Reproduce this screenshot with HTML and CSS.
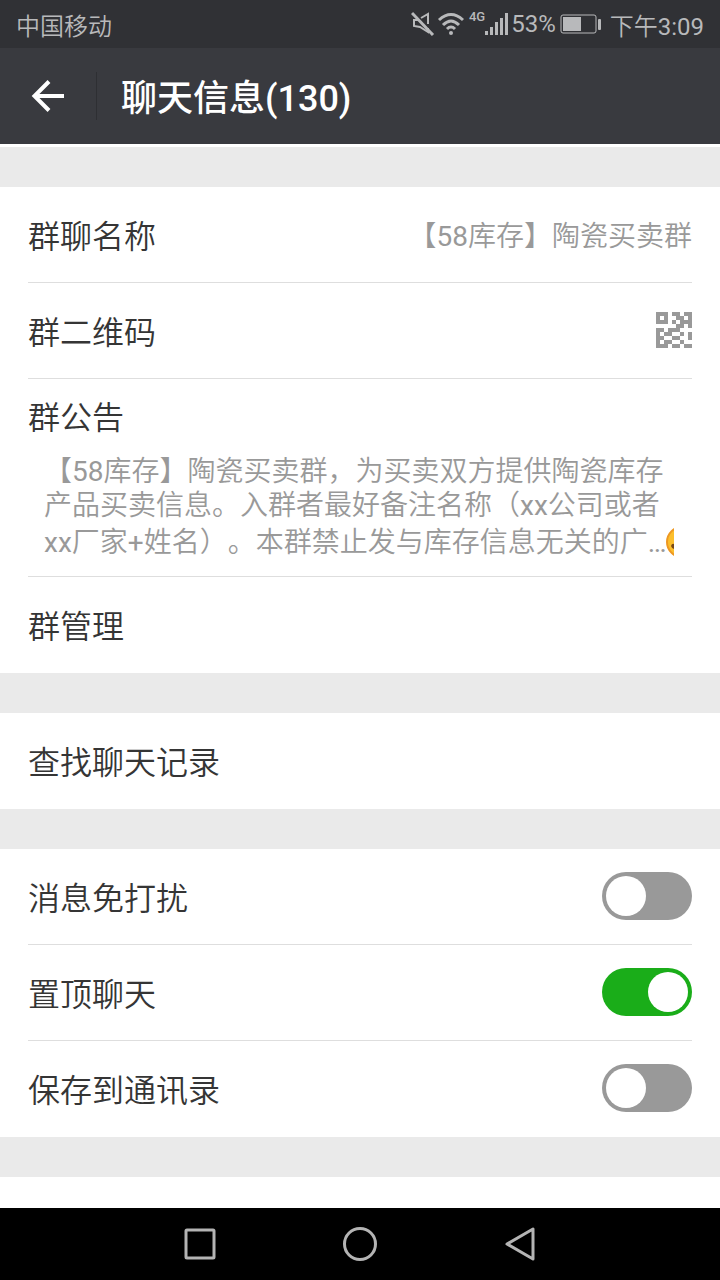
FILE: index.html
```
<!DOCTYPE html>
<html lang="zh-CN">
<head>
  <meta charset="UTF-8" />
  <title>聊天信息</title>
  <meta name="viewport" content="width=device-width, initial-scale=1.0" />
  <link rel="stylesheet" href="styles.css">
</head>
<body>

<div class="status-bar">
  <span>中国移动</span>
  <div class="status-icons">
    <svg class="icon-mute" width="24" height="26" viewBox="0 0 24 26" fill="none" stroke="currentColor" stroke-width="2">
      <path d="M10 7 L17 3 V13 M17 17 V21 L9 16 L3 15 V9 H7" />
      <path d="M1 2 L22 24" stroke-width="3" />
    </svg>
    <svg class="icon-wifi" width="28" height="24" viewBox="0 0 28 24" fill="none" stroke="currentColor" stroke-width="3">
      <path d="M2 8 Q14 -3 26 8" />
      <path d="M6 13 Q14 5 22 13" />
      <path d="M10 17 Q14 13 18 17" />
      <circle cx="14" cy="21" r="2" fill="currentColor" stroke="none" />
    </svg>
    <span class="net">4G</span>
    <svg class="icon-signal" width="24" height="22" viewBox="0 0 24 22" fill="currentColor">
      <rect x="0" y="18" width="3" height="4" />
      <rect x="5" y="14" width="3" height="8" />
      <rect x="10" y="9" width="3" height="13" />
      <rect x="15" y="5" width="3" height="17" />
      <rect x="20" y="0" width="3" height="22" />
    </svg>
    <span>53%</span>
    <svg class="icon-battery" width="42" height="20" viewBox="0 0 42 20">
      <rect x="1" y="1" width="35" height="18" rx="2" fill="none" stroke="currentColor" />
      <rect x="3" y="3" width="18" height="14" fill="currentColor" />
      <rect x="38" y="5" width="3" height="11" rx="1" fill="currentColor" />
    </svg>
    <span>下午3:09</span>
  </div>
</div>

<header class="header">
  <button class="back" aria-label="返回">
    <svg width="34" height="32" viewBox="0 0 34 32" fill="none" stroke="currentColor" stroke-width="4">
      <path d="M33 16 H4" />
      <path d="M18 1.500 L3.500 16 L18 30.500" />
    </svg>
  </button>
  <h1>聊天信息(130)</h1>
</header>

<main>
  <section class="group">
    <a class="row" href="#">
      <span>群聊名称</span>
      <span class="value">【58库存】陶瓷买卖群</span>
    </a>
    <a class="row" href="#">
      <span>群二维码</span>
      <svg width="36" height="36" viewBox="0 0 9 9" fill="#999" shape-rendering="crispEdges">
        <path fill-rule="evenodd" d="M0 0h3v3h-3z M1 1v1h1v-1z" />
        <path d="M4 0h2v1h-2z M7 0h2v1h-2z M5 1h2v1h-2z M8 1h1v3h-1z M4 2h1v1h-1z M6 2h2v1h-2z M5 3h2v1h-2z M0 4h2v1h-2z M3 4h3v1h-3z M0 5h1v1h-1z M2 5h2v1h-2z M6 5h1v1h-1z M8 5h1v2h-1z M0 6h2v1h-2z M4 6h2v1h-2z M2 7h2v1h-2z M6 7h1v1h-1z M0 7h1v1h-1z M0 8h3v1h-3z M4 8h2v1h-2z M7 8h2v1h-2z" />
      </svg>
    </a>
    <a class="row notice" href="#">
      <span>群公告</span>
      <p>【58库存】陶瓷买卖群，为买卖双方提供陶瓷库存产品买卖信息。入群者最好备注名称（xx公司或者xx厂家+姓名）。本群禁止发与库存信息无关的广…<svg class="emoji" width="8" height="38" viewBox="0 0 8 38">
        <circle cx="16" cy="19" r="15" fill="#fcbf2d" stroke="#ee9822" stroke-width="2" />
        <path d="M5 23 Q6 20 8 21 V26 Q6 26 5 23z" fill="#7a4a14" />
      </svg></p>
    </a>
    <a class="row" href="#"><span>群管理</span></a>
  </section>

  <section class="group">
    <a class="row" href="#"><span>查找聊天记录</span></a>
  </section>

  <section class="group">
    <label class="row" for="mute">
      <span>消息免打扰</span>
      <input class="switch" type="checkbox" id="mute">
    </label>
    <label class="row" for="sticky">
      <span>置顶聊天</span>
      <input class="switch" type="checkbox" id="sticky" checked>
    </label>
    <label class="row" for="save">
      <span>保存到通讯录</span>
      <input class="switch" type="checkbox" id="save">
    </label>
  </section>

  <section class="group rest"></section>
</main>

<nav class="nav-bar">
  <button aria-label="最近任务">
    <svg width="36" height="36" viewBox="0 0 36 36"><rect x="4" y="4" width="28" height="28" rx="1" /></svg>
  </button>
  <button aria-label="主屏幕">
    <svg width="36" height="36" viewBox="0 0 36 36"><circle cx="18" cy="18" r="15.500" /></svg>
  </button>
  <button aria-label="返回上一级">
    <svg width="36" height="36" viewBox="0 0 36 36"><path d="M31 3 V33 L5 18z" /></svg>
  </button>
</nav>

</body>
</html>
```

FILE: styles.css
```
* { box-sizing: border-box; margin: 0; padding: 0; }
body {
  font-family: Roboto, "Noto Sans CJK SC DemiLight", "Noto Sans CJK SC", sans-serif;
  display: flex;
  flex-direction: column;
  min-height: 100vh;
  background: #eaeaea;
  color: #353535;
  text-spacing-trim: space-all;
}
button {
  border: 0;
  background: none;
  color: inherit;
  cursor: pointer;
}
.status-bar {
  display: flex;
  justify-content: space-between;
  align-items: center;
  height: 48px;
  padding: 0 16px;
  background: #303135;
  color: #b8b9bb;
  font-size: 24px;
}
.status-icons {
  display: flex;
  align-items: center;
  gap: 4px;
}
.status-icons .net {
  align-self: flex-start;
  margin: 2px -4px 0 0;
  font-size: 13px;
  font-weight: 500;
}
.icon-mute {
  margin-right: -2px;
}
.icon-signal {
  margin-right: -2px;
}
.icon-battery {
  margin-right: 4px;
}
.header {
  display: flex;
  align-items: center;
  height: 96px;
  background: #393a3f;
  color: #fff;
}
.back {
  display: flex;
  align-items: center;
  justify-content: center;
  width: 97px;
  height: 48px;
  border-right: 1px solid #2e2f33;
}
.header h1 {
  padding: 0 24px 2px;
  font-family: Roboto, "Noto Sans CJK SC", sans-serif;
  font-size: 36px;
  font-weight: 500;
}
main {
  flex: 1;
  display: flex;
  flex-direction: column;
  gap: 40px;
  padding-top: 40px;
  border-top: 3px solid #fff;
}
.group {
  background: #fff;
  padding: 0 28px;
}
.rest {
  flex: 1;
}
.row {
  display: flex;
  align-items: center;
  justify-content: space-between;
  height: 96px;
  padding-bottom: 2px;
  border-bottom: 1px solid #dedede;
  color: inherit;
  font-size: 32px;
  text-decoration: none;
}
.row:last-child {
  border-bottom: 0;
}
.value {
  color: #999;
  font-size: 28px;
}
.notice {
  display: block;
  height: auto;
  padding: 16px 0 15px;
}
.notice span {
  display: block;
  line-height: 46px;
}
.notice p {
  padding: 14px 16px 0;
  color: #999;
  font-size: 28px;
  line-height: 34px;
}
.emoji {
  vertical-align: -9px;
}
.switch {
  appearance: none;
  display: flex;
  width: 90px;
  height: 48px;
  padding: 4px;
  border-radius: 24px;
  background: #999;
  cursor: pointer;
}
.switch::before {
  content: "";
  width: 40px;
  height: 40px;
  border-radius: 50%;
  background: #fff;
}
.switch:checked {
  justify-content: flex-end;
  background: #1aad19;
}
.nav-bar {
  display: flex;
  justify-content: center;
  align-items: center;
  gap: 124px;
  height: 72px;
  background: #000;
}
.nav-bar svg {
  display: block;
  fill: none;
  stroke: #b4b4b4;
  stroke-width: 3;
  stroke-linejoin: round;
}
```
